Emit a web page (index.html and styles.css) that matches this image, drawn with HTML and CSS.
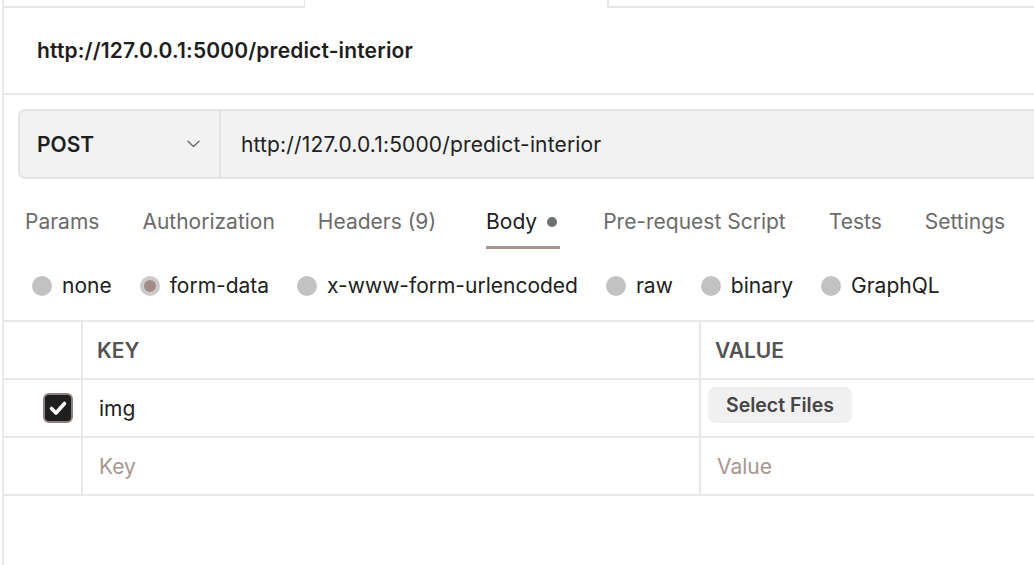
FILE: index.html
```html
<!DOCTYPE html>
<html>
<head>
<meta charset="utf-8">
<link rel="stylesheet" href="styles.css">
</head>
<body>
<div class="app">
  <div class="tabstrip">
    <div class="tab tab-left"></div>
    <div class="tab tab-active"></div>
    <div class="tab tab-right"></div>
  </div>
  <div class="title">http://127.0.0.1:5000/predict-interior</div>
  <div class="request">
    <div class="urlbar">
      <div class="method">
        <span>POST</span>
        <svg class="chev" width="13" height="8" viewBox="0 0 13 8"><path d="M1 1.2 L6.5 6.6 L12 1.2" fill="none" stroke="#6a6a6a" stroke-width="1.4" stroke-linecap="round" stroke-linejoin="round"/></svg>
      </div>
      <div class="url">http://127.0.0.1:5000/predict-interior</div>
    </div>
    <nav class="tabs">
      <span class="tab-item">Params</span>
      <span class="tab-item">Authorization</span>
      <span class="tab-item">Headers <span class="count">(9)</span></span>
      <span class="tab-item active">Body<i class="dot"></i></span>
      <span class="tab-item">Pre-request Script</span>
      <span class="tab-item">Tests</span>
      <span class="tab-item">Settings</span>
    </nav>
    <div class="bodytypes">
      <span class="radio"><i class="r"></i>none</span>
      <span class="radio selected"><i class="r"></i>form-data</span>
      <span class="radio"><i class="r"></i>x-www-form-urlencoded</span>
      <span class="radio"><i class="r"></i>raw</span>
      <span class="radio"><i class="r"></i>binary</span>
      <span class="radio"><i class="r"></i>GraphQL</span>
    </div>
  </div>
  <div class="table">
    <div class="row head">
      <div class="cell check"></div>
      <div class="cell">KEY</div>
      <div class="cell">VALUE</div>
    </div>
    <div class="row">
      <div class="cell check">
        <span class="checkbox"><svg width="22" height="22" viewBox="0 0 22 22"><path d="M4.5 11.5 L9 16 L17.5 6.5" fill="none" stroke="#fff" stroke-width="3.6" stroke-linecap="round" stroke-linejoin="round"/></svg></span>
      </div>
      <div class="cell key">img</div>
      <div class="cell"><span class="btn">Select Files</span></div>
    </div>
    <div class="row">
      <div class="cell check"></div>
      <div class="cell placeholder">Key</div>
      <div class="cell placeholder">Value</div>
    </div>
  </div>
</div>
</body>
</html>
```
FILE: styles.css
```css
html, body {
  margin: 0;
  padding: 0;
  background: #ffffff;
}

body {
  font-family: Inter, "Noto Sans", "Liberation Sans", sans-serif;
  color: #212121;
  overflow: hidden;
}

.app {
  margin-left: 2px;
  border-left: 2px solid #e8e8e8;
  height: 565px;
  box-sizing: border-box;
}

/* top tab strip */
.tabstrip {
  display: flex;
  height: 8px;
}

.tab {
  box-sizing: border-box;
  height: 8px;
}

.tab-left {
  width: 301px;
  border-right: 1px solid #e4e4e4;
  border-bottom: 2px solid #e6e6e6;
}

.tab-active {
  width: 302px;
}

.tab-right {
  flex: 1;
  border-left: 2px solid #e4e4e4;
  border-bottom: 2px solid #e6e6e6;
}

/* title */
.title {
  height: 85px;
  display: flex;
  align-items: center;
  padding-left: 33px;
  font-size: 21px;
  letter-spacing: 0.15px;
  font-weight: 600;
  color: #1e1e1e;
  border-bottom: 2px solid #e8e8e8;
}

/* request area */
.request {
  padding-left: 14px;
}

.urlbar {
  margin-top: 14px;
  margin-right: -20px;
  height: 70px;
  box-sizing: border-box;
  border: 2px solid #e4e4e4;
  border-radius: 7px;
  background: #f2f2f2;
  display: flex;
}

.method {
  width: 201px;
  box-sizing: border-box;
  padding-left: 17px;
  padding-right: 19px;
  display: flex;
  align-items: center;
  justify-content: space-between;
  border-right: 2px solid #e2e2e2;
  font-size: 21px;
  font-weight: 600;
  color: #1e1e1e;
}

.url {
  padding-left: 20px;
  display: flex;
  align-items: center;
  font-size: 21px;
  letter-spacing: 0.15px;
  color: #212121;
}

/* tabs */
.tabs {
  display: flex;
  gap: 43px;
  margin-top: 19px;
  padding-left: 7px;
}

.tab-item {
  padding: 12px 0 12px;
  border-bottom: 3px solid transparent;
  font-size: 21px;
  line-height: 24px;
  color: #6b6b6b;
}

.tab-item.active {
  margin-left: 7px;
  padding-right: 3px;
  color: #212121;
  border-bottom-color: #a8968f;
  display: flex;
  align-items: center;
  gap: 10px;
}

.dot {
  width: 10px;
  height: 10px;
  border-radius: 50%;
  background: #6b7470;
}

/* body types */
.bodytypes {
  display: flex;
  gap: 28px;
  margin-top: 25px;
  padding-left: 14px;
}

.radio {
  display: flex;
  align-items: center;
  gap: 10px;
  font-size: 21px;
  line-height: 24px;
  color: #212121;
}

.r {
  width: 20px;
  height: 20px;
  border-radius: 50%;
  background: #c2c2c2;
  box-sizing: border-box;
}

.radio.selected .r {
  background: #a38c85;
  border: 4px solid #cbcbcb;
}

/* table */
.table {
  margin-top: 22px;
  border-top: 2px solid #e8e8e8;
}

.row {
  display: grid;
  grid-template-columns: 79px 618px 1fr;
  height: 58px;
  box-sizing: border-box;
  border-bottom: 2px solid #e8e8e8;
}

.cell {
  display: flex;
  align-items: center;
  padding-left: 14px;
  border-right: 2px solid #e8e8e8;
  font-size: 21px;
  color: #212121;
}

.cell:last-child {
  border-right: none;
}

.head .cell {
  font-size: 21px;
  font-weight: 600;
  color: #545454;
}

.cell.check {
  padding-left: 0;
  justify-content: flex-end;
  padding-right: 8px;
}

.checkbox {
  width: 30px;
  height: 30px;
  box-sizing: border-box;
  border-radius: 6px;
  background: #1f1f1f;
  border: 2px solid #8a8380;
  display: flex;
  align-items: center;
  justify-content: center;
}

.cell.key {
  padding-left: 16px;
}

.btn {
  margin-left: -7px;
  margin-top: -6px;
  padding: 0 18px 0 18px;
  height: 36px;
  display: flex;
  align-items: center;
  background: #f0f0f0;
  border-radius: 7px;
  font-size: 19.5px;
  font-weight: 600;
  color: #464646;
}

.placeholder {
  color: #a6978f;
  padding-left: 16px;
}
```
